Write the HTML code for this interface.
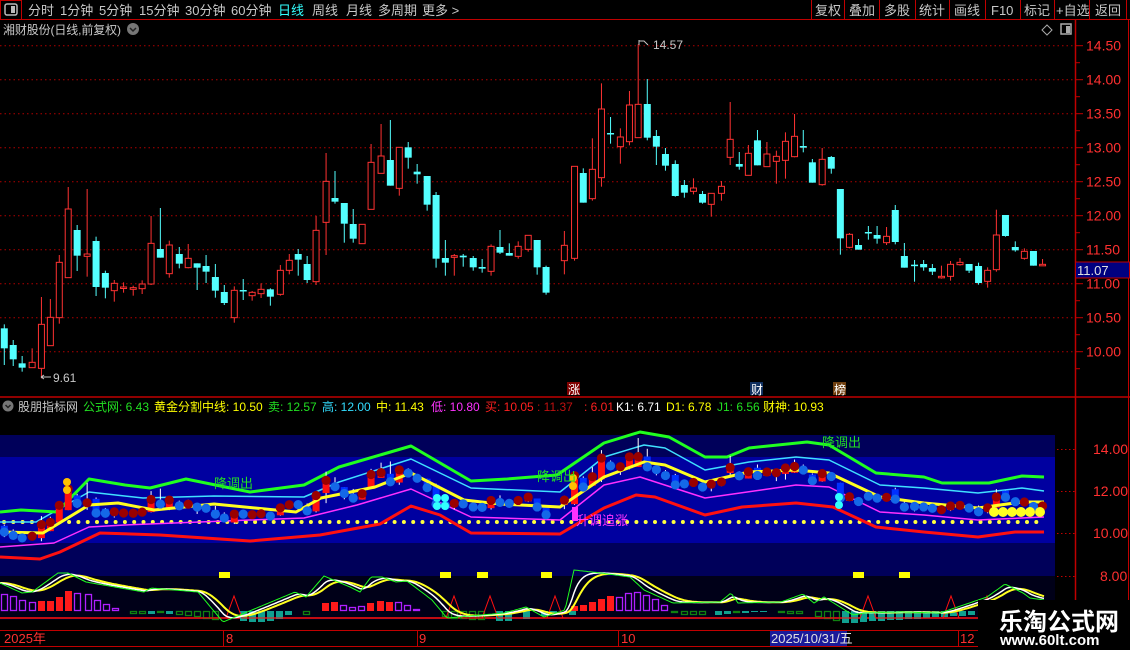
<!DOCTYPE html>
<html><head><meta charset="utf-8">
<style>
html,body{margin:0;padding:0;background:#000;width:1130px;height:650px;overflow:hidden}
svg{display:block}
text{font-family:"Liberation Sans","Noto Sans CJK SC",sans-serif}
</style></head><body>
<svg id="s" xmlns="http://www.w3.org/2000/svg" width="1130" height="650" viewBox="0 0 1130 650">
<rect width="1130" height="650" fill="#000"/>
<g font-size="13" fill="#c8c8c8">
<rect x="0.5" y="0.5" width="21" height="19" fill="none" stroke="#c00000"/>
<rect x="5" y="4" width="12" height="11" rx="2" fill="none" stroke="#bbb" stroke-width="1.5"/>
<rect x="11" y="6" width="4" height="7" fill="#bbb"/>
<text x="28" y="15">分时</text><text x="60" y="15">1分钟</text><text x="99" y="15">5分钟</text><text x="139" y="15">15分钟</text><text x="185" y="15">30分钟</text><text x="231" y="15">60分钟</text>
<text x="278" y="15" fill="#33ffff">日线</text><text x="312" y="15">周线</text><text x="346" y="15">月线</text><text x="378" y="15">多周期</text><text x="422" y="15">更多 &gt;</text>
<text x="815" y="15">复权</text><text x="849" y="15">叠加</text><text x="884" y="15">多股</text><text x="919" y="15">统计</text><text x="954" y="15">画线</text><text x="991" y="15">F10</text><text x="1024" y="15">标记</text><text x="1056" y="15">+自选</text><text x="1095" y="15">返回</text>
</g>
<g stroke="#c00000" stroke-width="1">
<line x1="0" y1="19.5" x2="1130" y2="19.5"/>
<line x1="811.5" y1="0" x2="811.5" y2="19"/><line x1="844.5" y1="0" x2="844.5" y2="19"/><line x1="879.5" y1="0" x2="879.5" y2="19"/><line x1="915.5" y1="0" x2="915.5" y2="19"/><line x1="949.5" y1="0" x2="949.5" y2="19"/><line x1="985.5" y1="0" x2="985.5" y2="19"/><line x1="1020.5" y1="0" x2="1020.5" y2="19"/><line x1="1054.5" y1="0" x2="1054.5" y2="19"/><line x1="1089.5" y1="0" x2="1089.5" y2="19"/><line x1="1126.5" y1="0" x2="1126.5" y2="19"/>
<line x1="1075.5" y1="20" x2="1075.5" y2="650" stroke-width="1.5"/>
<line x1="1128.5" y1="20" x2="1128.5" y2="650"/>
<line x1="0" y1="397" x2="1130" y2="397" stroke-width="1.5"/>
<line x1="0" y1="630.5" x2="1075" y2="630.5"/>
<line x1="0" y1="646.5" x2="1075" y2="646.5"/>
</g>
<text x="3" y="34" font-size="12" fill="#c8c8c8" textLength="118">湘财股份(日线,前复权)</text>
<circle cx="133" cy="29" r="6" fill="#777"/><path d="M130 28l3 3 3-3" stroke="#222" stroke-width="1.5" fill="none"/>
<path d="M1047 25l5 5-5 5-5-5z" fill="none" stroke="#aaa"/>
<rect x="1061" y="24" width="10" height="10" fill="none" stroke="#aaa" stroke-width="1.5"/><rect x="1066" y="26" width="4" height="7" fill="#aaa"/>
<g id="grid"></g>
<g id="main"></g>
<text x="653" y="49" font-size="12" fill="#c8c8c8">14.57</text>
<path d="M639 40v5M639 41h5l4 4" stroke="#c8c8c8" fill="none"/>
<text x="53" y="382" font-size="12" fill="#c8c8c8">9.61</text>
<path d="M41 377h10M41 377l3-2M41 377l3 2" stroke="#c8c8c8" fill="none"/>
<g font-size="14" fill="#ff3030" id="axl"></g>
<rect x="1075.5" y="262" width="54" height="16" fill="#000080" stroke="#c00000"/>
<text x="1077" y="275" font-size="13" fill="#e0e0e0">11.07</text>
<rect x="567" y="382" width="13" height="13" fill="#800000"/><text x="568" y="394" font-size="12" fill="#fff">涨</text>
<rect x="750" y="382" width="13" height="13" fill="#103060"/><text x="751" y="394" font-size="12" fill="#fff">财</text>
<rect x="833" y="382" width="13" height="13" fill="#704010"/><text x="834" y="394" font-size="12" fill="#fff">榜</text>
<circle cx="8" cy="406" r="5.5" fill="#777"/><path d="M5.5 405l2.5 2.5 2.5-2.5" stroke="#222" stroke-width="1.5" fill="none"/>
<g font-size="12">
<text x="18" y="411" fill="#c8c8c8">股朋指标网</text>
<text x="83" y="411" fill="#22e022">公式网: 6.43</text>
<text x="154" y="411" fill="#ffff00">黄金分割中线: 10.50</text>
<text x="268" y="411" fill="#22e022">卖: 12.57</text>
<text x="322" y="411" fill="#33ddff">高: 12.00</text>
<text x="376" y="411" fill="#ffff00">中: 11.43</text>
<text x="431" y="411" fill="#ff33ff">低: 10.80</text>
<text x="485" y="411" fill="#ff2020">买: 10.05</text>
<text x="537" y="411" fill="#c01010">: 11.37</text>
<text x="584" y="411" fill="#ff2020">: 6.01</text>
<text x="616" y="411" fill="#ffffff">K1: 6.71</text>
<text x="666" y="411" fill="#ffff00">D1: 6.78</text>
<text x="717" y="411" fill="#22e022">J1: 6.56</text>
<text x="763" y="411" fill="#ffff00">财神: 10.93</text>
</g>
<rect x="0" y="435" width="1055" height="141" fill="#00005a"/>
<rect x="0" y="457" width="1055" height="86" fill="#0000a0"/>
<rect x="0" y="576" width="1055" height="44" fill="#000018"/>
<g id="ind"></g>
<g font-size="13">
<text x="214" y="488" fill="#22e022">降调出</text>
<text x="537" y="481" fill="#22e022">降调出</text>
<text x="822" y="447" fill="#22e022">降调出</text>
<text x="576" y="525" fill="#ff33ff">升调追涨</text>
</g>
<g font-size="14" fill="#ff3030">
<text x="1093" y="454">14.00</text><text x="1093" y="496">12.00</text><text x="1093" y="538">10.00</text><text x="1100" y="581">8.00</text>
</g>
<g stroke="#c00000" stroke-dasharray="1.5 2.5">
<line x1="1057" y1="449.5" x2="1075" y2="449.5"/><line x1="1057" y1="491.5" x2="1075" y2="491.5"/><line x1="1057" y1="533.5" x2="1075" y2="533.5"/><line x1="1057" y1="576.5" x2="1075" y2="576.5"/>
</g>
<g id="sub"></g>
<g stroke="#c00000">
<line x1="223.5" y1="630" x2="223.5" y2="646"/><line x1="417.5" y1="630" x2="417.5" y2="646"/><line x1="618.5" y1="630" x2="618.5" y2="646"/><line x1="958.5" y1="630" x2="958.5" y2="646"/>
</g>
<g font-size="13" fill="#ff3030">
<text x="4" y="643">2025年</text><text x="226" y="643">8</text><text x="419" y="643">9</text><text x="621" y="643">10</text><text x="960" y="643">12</text>
</g>
<rect x="770" y="631" width="77" height="15" fill="#1a1a9a"/>
<text x="771" y="643" font-size="13" fill="#e0e0e0">2025/10/31/五</text>
<rect x="978" y="600" width="152" height="50" fill="#000"/>
<text x="999" y="630" font-size="24" font-weight="bold" fill="#fff">乐淘公式网</text>
<text x="1000" y="645" font-size="15" font-weight="bold" fill="#fff" font-family="Liberation Serif,serif">www.60lt.com</text>
</svg>
<script>
var NS="http://www.w3.org/2000/svg";
function el(p,t,a){var e=document.createElementNS(NS,t);for(var k in a)e.setAttribute(k,a[k]);p.appendChild(e);return e;}
var grid=document.getElementById('grid'),main=document.getElementById('main'),ind=document.getElementById('ind'),sub=document.getElementById('sub'),axl=document.getElementById('axl');
for(var i=0;i<10;i++){var p=10+i*0.5,y=351.7-(p-10)*68;
 el(grid,'line',{x1:0,y1:y,x2:1075,y2:y,stroke:'#b00000','stroke-dasharray':'1.5 3'});
 var t=el(axl,'text',{x:1086,y:y+5});t.textContent=p.toFixed(2);
 el(grid,'line',{x1:1075,y1:y,x2:1083,y2:y,stroke:'#c00000'});
 el(grid,'line',{x1:1075,y1:y+17,x2:1080,y2:y+17,stroke:'#c00000'});
}
var L=[[12,880,940,868,990,0],[37,930,973,915,993,0],[62,985,998,963,1010,0],[90,982,998,940,998,1],[116,868,1000,786,1030,1],[141,847,932,792,932,1],[166,682,848,660,866,1],[191,522,728,456,728,1],[216,585,662,570,708,0],[244,657,664,462,725,1],[269,618,756,605,783,0],[295,714,758,707,790,0],[320,745,767,735,800,1],[346,756,760,742,773,1],[373,758,763,752,782,1],[398,747,761,736,777,1],[423,625,747,543,750,1],[449,642,668,519,668,0],[474,630,716,617,728,1],[502,657,686,636,700,0],[527,670,698,627,700,1],[552,685,698,685,765,0],[577,693,710,660,744,0],[603,726,767,687,788,0],[628,771,804,750,810,0],[656,766,848,754,863,1],[681,765,767,732,795,0],[706,772,782,768,797,1],[731,763,776,745,789,1],[757,763,785,760,812,0],[785,706,778,690,782,1],[810,676,706,657,718,1],[835,657,674,642,722,0],[860,687,735,663,744,0],[885,586,740,543,750,1],[913,439,562,354,660,1],[938,489,500,408,506,0],[964,504,566,504,623,0],[989,567,611,522,623,0],[1014,568,626,568,626,1],[1039,382,523,327,523,1],[1067,363,415,267,415,1],[1093,375,452,255,452,0],[1118,337,460,337,482,1],[1143,337,368,321,401,0],[1168,410,418,387,446,0],[1196,423,509,423,527,0],[1221,480,671,471,698,0],[1247,669,683,615,722,0],[1272,662,667,657,722,1],[1297,662,667,657,695,0],[1325,669,697,663,707,0],[1350,696,701,672,713,0],[1375,634,709,628,722,1],[1400,636,653,585,657,0],[1426,654,662,625,662,0],[1451,634,664,619,671,1],[1479,601,643,601,650,1],[1504,615,697,615,719,0],[1529,696,773,692,779,0]];
var R=[[12,631,677,588,718,1],[40,394,670,394,677,1],[64,414,503,400,503,0],[89,403,491,310,497,1],[114,222,428,145,455,1],[139,294,298,246,326,0],[166,306,335,280,386,1],[191,210,320,168,331,1],[215,208,308,28,308,1],[240,207,308,132,316,0],[265,303,335,285,390,0],[290,357,392,339,407,0],[317,387,483,376,485,0],[342,450,473,435,488,0],[367,459,469,430,478,1],[392,477,503,468,506,0],[416,475,508,475,545,1],[444,454,475,438,497,1],[468,313,367,201,390,1],[493,387,395,351,404,0],[518,355,421,330,421,1],[543,316,391,285,391,0],[569,357,395,321,395,1],[595,364,379,347,446,1],[620,319,376,292,431,1],[645,304,365,237,367,1],[669,333,338,285,352,0],[694,382,443,372,443,0],[721,373,449,339,452,1],[746,366,401,363,416,0],[771,462,610,462,659,0],[796,598,637,594,640,1],[821,630,644,612,644,0],[848,591,593,573,614,0],[872,600,611,573,626,0],[898,604,623,576,630,1],[922,525,621,510,628,0],[947,663,698,624,698,0],[975,689,691,675,740,0],[1000,687,697,675,707,0],[1024,699,710,687,720,0],[1049,724,728,692,731,1],[1074,688,724,678,737,1],[1100,682,689,669,692,1],[1125,687,707,687,714,0],[1151,693,744,683,749,0],[1176,706,739,697,758,1],[1200,600,704,524,710,1],[1225,540,603,540,605,0],[1252,636,646,619,650,0],[1277,649,670,640,674,1],[1302,648,692,648,692,0],[1327,688,691,672,691,1]];
var C=[];
L.forEach(function(c){C.push({x:c[0]/2.8,bt:35+c[1]/3,bb:35+c[2]/3,wt:35+c[3]/3,wb:35+c[4]/3,up:c[5]});});
R.forEach(function(c){C.push({x:560+c[0]/2.75,bt:35+c[1]/3,bb:35+c[2]/3,wt:35+c[3]/3,wb:35+c[4]/3,up:c[5]});});
function iy(y){return 533-(351.7-y)*21/68;}
C.forEach(function(c){
 var col=c.up?'#ff3232':'#54ffff';var h=Math.max(c.bb-c.bt,1.5);
 el(main,'line',{x1:c.x,y1:c.wt,x2:c.x,y2:c.wb,stroke:col});
 if(c.up) el(main,'rect',{x:c.x-3,y:c.bt,width:6,height:h,fill:'#000',stroke:col});
 else el(main,'rect',{x:c.x-3.5,y:c.bt,width:7,height:h,fill:col});
});
function poly(pts,col,w){el(ind,'polyline',{points:pts.map(function(p){return p.join(',')}).join(' '),fill:'none',stroke:col,'stroke-width':w,'stroke-linejoin':'round'});}
for(var x=4;x<=1044;x+=9.3) el(ind,'circle',{cx:x,cy:522,r:2,fill:'#ffff40'});
poly([[0,557],[40,559],[60,552],[100,533],[160,535],[250,541],[320,535],[380,524],[411,506],[440,515],[471,533],[560,534],[604,508],[636,495],[655,497],[705,515],[742,507],[796,503],[833,507],[876,527],[924,532],[978,537],[1015,532],[1044,532]],'#ff1010',3);
poly([[0,547],[54,543],[89,527],[125,525],[250,520],[304,518],[357,505],[411,489],[471,517],[560,520],[604,485],[640,477],[705,498],[796,485],[829,487],[880,512],[924,515],[978,520],[1044,517]],'#ff30ff',1.5);
poly([[0,522],[36,522],[89,492],[143,498],[214,496],[304,497],[339,482],[411,459],[471,488],[560,492],[604,457],[644,445],[665,448],[705,470],[749,462],[796,457],[829,460],[880,485],[924,488],[978,493],[1022,488],[1044,491]],'#40e0ff',1.5);
poly([[0,512],[21,510],[57,512],[89,479],[125,485],[150,488],[186,479],[250,492],[304,485],[339,467],[411,446],[471,481],[507,479],[557,475],[604,443],[640,432],[669,437],[705,457],[727,457],[749,448],[807,442],[829,445],[876,473],[924,477],[942,483],[989,483],[1022,476],[1044,477]],'#20ff20',3);
C.forEach(function(c){
 if(c.x>1046)return;
 el(ind,'line',{x1:c.x,y1:iy(c.wt),x2:c.x,y2:iy(c.wb),stroke:'#fff'});
 var t=iy(c.bt),b=iy(c.bb);
 el(ind,'rect',{x:c.x-3.5,y:t,width:7,height:Math.max(b-t,1.5),fill:c.up?'#ff1010':'#0030ff'});
});
poly([[0,532],[43,533],[89,505],[118,503],[154,510],[214,504],[296,512],[321,498],[375,487],[411,473],[464,500],[500,504],[560,507],[604,477],[644,462],[665,465],[705,482],[749,472],[796,470],[829,473],[880,497],[924,503],[978,508],[1022,502],[1044,502]],'#ffff20',3);
C.forEach(function(c){
 if(c.x>1046)return;
 var y=iy(c.up?c.bt:c.bb);
 el(ind,'circle',{cx:c.x,cy:y,r:4.6,fill:c.up?'#9a0000':'#1468e8'});
});
[[994,512],[1003,512],[1012,512],[1021,512],[1030,512],[1040,512]].forEach(function(p){el(ind,'circle',{cx:p[0],cy:p[1],r:5,fill:'#ffff20'});});
[[67,482],[67,490],[573,478],[573,486]].forEach(function(p){el(ind,'circle',{cx:p[0],cy:p[1],r:4,fill:'#ffc000'});});
[[437,498],[437,506],[445,498],[445,506],[839,497],[839,505]].forEach(function(p){el(ind,'circle',{cx:p[0],cy:p[1],r:4,fill:'#30ffff'});});
el(ind,'rect',{x:572,y:507,width:6,height:14,fill:'#ff30ff'});
[[219,230],[440,451],[477,488],[541,552],[853,864],[899,910]].forEach(function(a){el(sub,'rect',{x:a[0],y:572,width:a[1]-a[0],height:6,fill:'#ffff00'});});
el(sub,'line',{x1:0,y1:618,x2:1044,y2:618,stroke:'#ff1010','stroke-width':1.5});
var H=[[4,17,'p'],[13,15,'p'],[22,11,'p'],[32,9,'p'],[41,10,'r'],[50,10,'r'],[59,14,'r'],[68,20,'r'],[77,18,'p'],[88,17,'p'],[97,11,'p'],[106,7,'p'],[115,3,'p'],[133,-3,'g'],[142,-3,'g'],[151,-3,'t'],[160,-2,'g'],[169,-3,'t'],[179,-4,'g'],[188,-5,'g'],[197,-6,'g'],[206,-8,'g'],[215,-9,'g'],[243,-10,'t'],[252,-11,'t'],[261,-11,'t'],[270,-10,'t'],[279,-8,'t'],[288,-4,'t'],[306,-4,'g'],[325,8,'r'],[334,9,'r'],[343,6,'p'],[352,4,'p'],[361,5,'p'],[370,8,'r'],[380,10,'r'],[389,9,'r'],[398,9,'p'],[407,6,'p'],[416,2,'p'],[445,-6,'g'],[454,-8,'g'],[463,-8,'g'],[472,-9,'g'],[481,-9,'g'],[499,-10,'t'],[508,-10,'t'],[526,-8,'t'],[544,-5,'t'],[553,-4,'t'],[572,-4,'t'],[574,5,'r'],[583,6,'r'],[592,9,'r'],[601,12,'r'],[610,15,'r'],[619,14,'p'],[628,18,'p'],[637,19,'p'],[646,16,'p'],[655,12,'p'],[664,6,'p'],[674,-2,'g'],[684,-4,'g'],[693,-4,'g'],[702,-4,'g'],[718,-4,'t'],[727,-3,'t'],[736,-2,'g'],[745,-2,'t'],[754,-1,'t'],[763,-1,'t'],[781,-2,'g'],[790,-3,'g'],[799,-3,'g'],[818,-6,'g'],[827,-8,'g'],[836,-10,'g'],[845,-12,'t'],[854,-12,'t'],[863,-11,'t'],[872,-10,'t'],[881,-10,'t'],[890,-9,'t'],[899,-9,'t'],[908,-8,'t'],[917,-8,'t'],[926,-7,'t'],[935,-6,'t'],[944,-6,'t'],[953,-5,'t'],[962,-5,'t'],[971,-4,'t']];
H.forEach(function(b){var x=b[0],v=b[1],t=b[2];var y=v>0?611-v:611,h=Math.abs(v);
 if(t=='r')el(sub,'rect',{x:x-3,y:y,width:7,height:h,fill:'#ff1a1a'});
 else if(t=='p')el(sub,'rect',{x:x-2.5,y:y+0.5,width:6,height:h-1,fill:'none',stroke:'#b020ff','stroke-width':1.3});
 else if(t=='t')el(sub,'rect',{x:x-3,y:y,width:7,height:h,fill:'#10a090'});
 else el(sub,'rect',{x:x-2.5,y:y+0.5,width:6,height:h-1,fill:'none',stroke:'#108010','stroke-width':1.3});
});
var rs=[[0,618]];[[234],[454],[490],[555],[868],[951],[987]].forEach(function(a){rs.push([a[0]-8,618],[a[0],596],[a[0]+8,618]);});rs.push([1044,618]);
el(sub,'polyline',{points:rs.map(function(p){return p.join(',')}).join(' '),fill:'none',stroke:'#ff1010'});
var G=[[0,583],[22,593],[32,592],[58,573],[68,573],[86,582],[144,592],[151,588],[198,592],[223,622],[259,607],[295,592],[306,597],[324,576],[350,587],[360,592],[371,577],[382,577],[396,582],[407,581],[432,600],[447,618],[504,613],[526,607],[544,617],[565,610],[574,570],[601,573],[630,577],[644,590],[673,603],[720,602],[731,593],[738,603],[781,602],[803,594],[814,603],[824,597],[853,615],[864,613],[900,612],[940,613],[987,597],[1005,584],[1023,593],[1030,598],[1044,600]];
function interp(pts){var a=[];for(var x=0;x<=1044;x++){for(var i=0;i<pts.length-1;i++){if(x>=pts[i][0]&&x<=pts[i+1][0]){var t=(x-pts[i][0])/((pts[i+1][0]-pts[i][0])||1);a.push(pts[i][1]+t*(pts[i+1][1]-pts[i][1]));break;}}}return a;}
var g=interp(G);function ema(a,k){var o=[],v=a[0];for(var i=0;i<a.length;i++){v=v+(a[i]-v)*k;o.push(v);}return o;}
var w=ema(g,0.12),yl=ema(w,0.12);
function pl(a,col,sw){var s='';for(var i=0;i<a.length;i+=2)s+=i+','+a[i].toFixed(1)+' ';el(sub,'polyline',{points:s,fill:'none',stroke:col,'stroke-width':sw});}
pl(yl,'#ffff20',2);pl(w,'#ffffff',1.5);pl(g,'#20ff20',1);
</script>
</body></html>
